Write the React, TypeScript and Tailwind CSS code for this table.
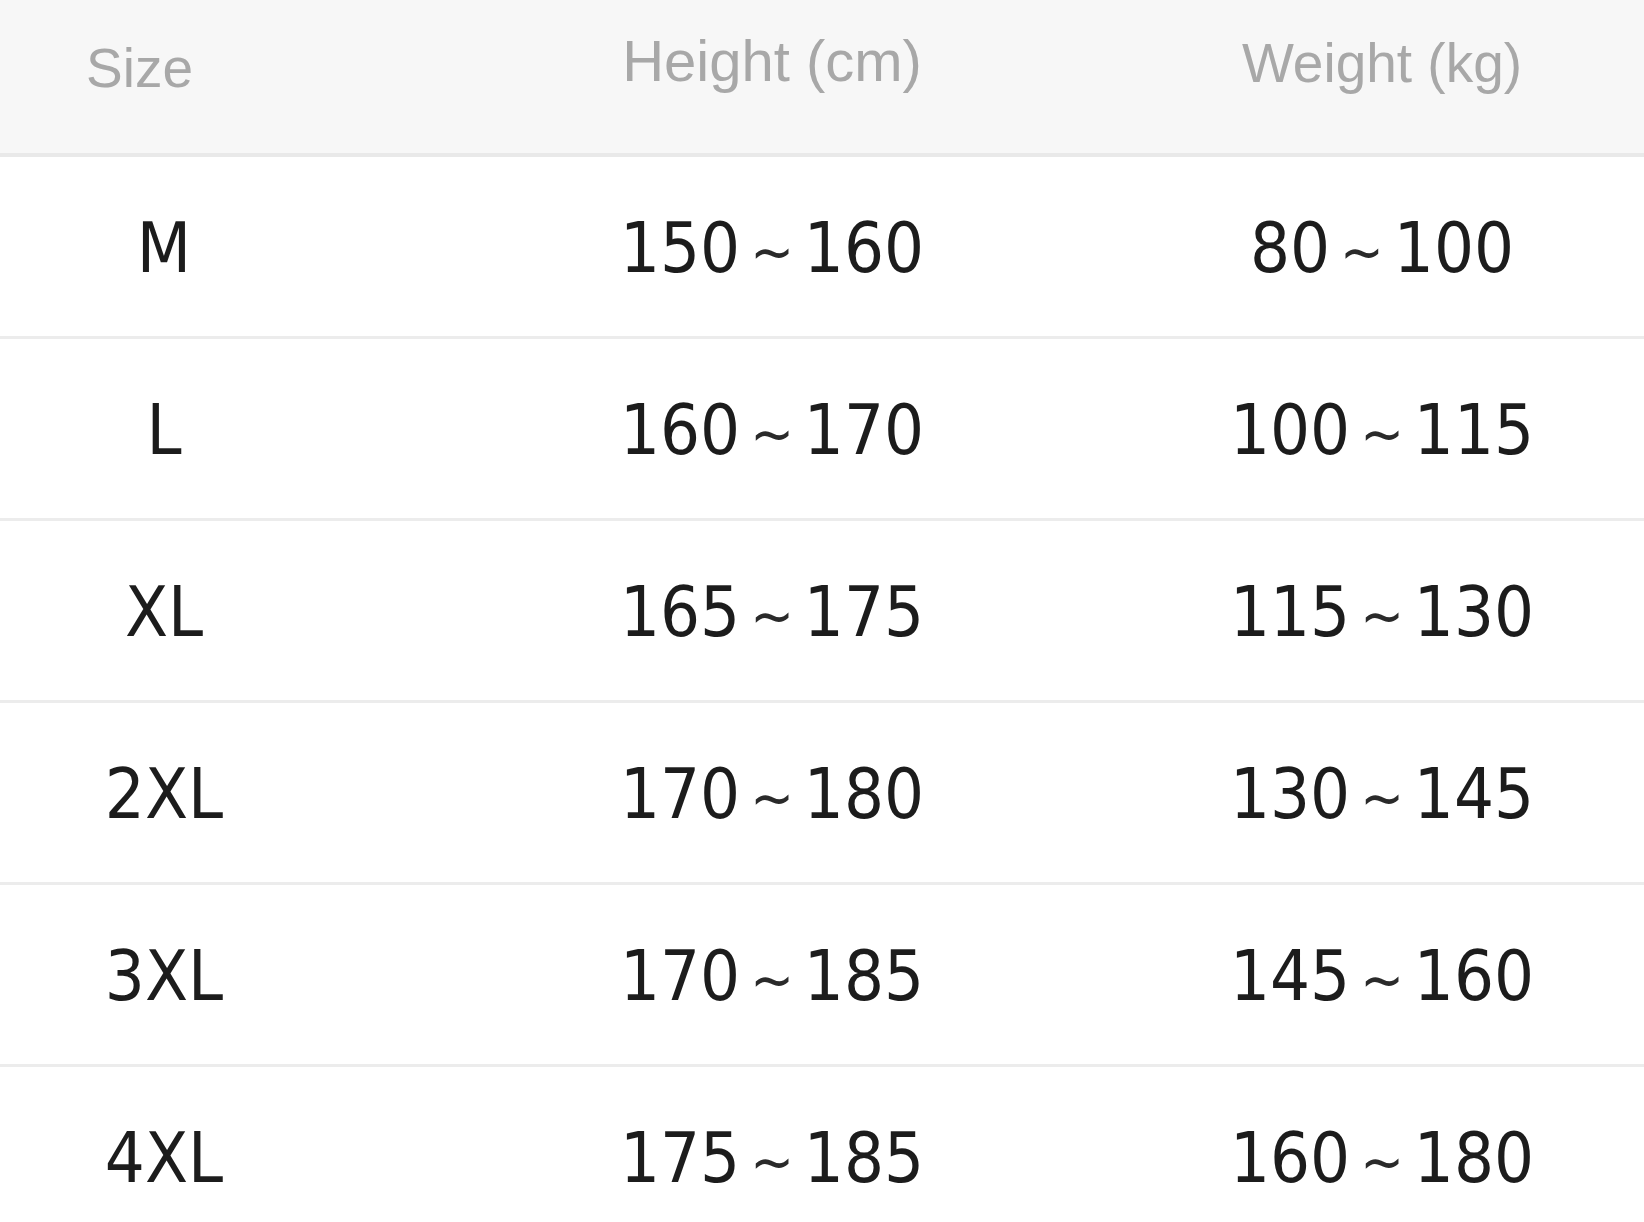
import React from 'react';

const rows = [
  { size: 'M', height: ['150', '160'], weight: ['80', '100'] },
  { size: 'L', height: ['160', '170'], weight: ['100', '115'] },
  { size: 'XL', height: ['165', '175'], weight: ['115', '130'] },
  { size: '2XL', height: ['170', '180'], weight: ['130', '145'] },
  { size: '3XL', height: ['170', '185'], weight: ['145', '160'] },
  { size: '4XL', height: ['175', '185'], weight: ['160', '180'] },
];

function Range({ from, to }: { from: string; to: string }) {
  return (
    <div className="flex items-center justify-center">
      <span>{from}</span>
      <span className="mx-[10px] mt-[8px] text-[58px] leading-none text-[#2a2a2a]">~</span>
      <span>{to}</span>
    </div>
  );
}

export default function App() {
  return (
    <div className="h-[1222px] w-full overflow-hidden bg-white">
      {/* Header */}
      <div className="grid h-[157px] grid-cols-[328px_888px_332px] border-b-4 border-[#e9e9e9] bg-[#f7f7f7] font-['Liberation_Sans',Arial,sans-serif] text-[55px] leading-none text-[#a8a8a8]">
        <div className="pl-[86px] pt-[41px] text-left">Size</div>
        <div className="pt-[32px] text-center text-[58px]">Height (cm)</div>
        <div className="pt-[36px] text-center">Weight (kg)</div>
      </div>

      {/* Body */}
      {rows.map((row) => (
        <div
          key={row.size}
          className="grid h-[182px] grid-cols-[328px_888px_332px] items-center border-b-[3px] border-[#ececec] pt-[3px] font-['DejaVu_Sans_Condensed','DejaVu_Sans',sans-serif] text-[70px] leading-none text-[#1c1c1c]"
        >
          <div className="text-center">{row.size}</div>
          <Range from={row.height[0]} to={row.height[1]} />
          <Range from={row.weight[0]} to={row.weight[1]} />
        </div>
      ))}
    </div>
  );
}
